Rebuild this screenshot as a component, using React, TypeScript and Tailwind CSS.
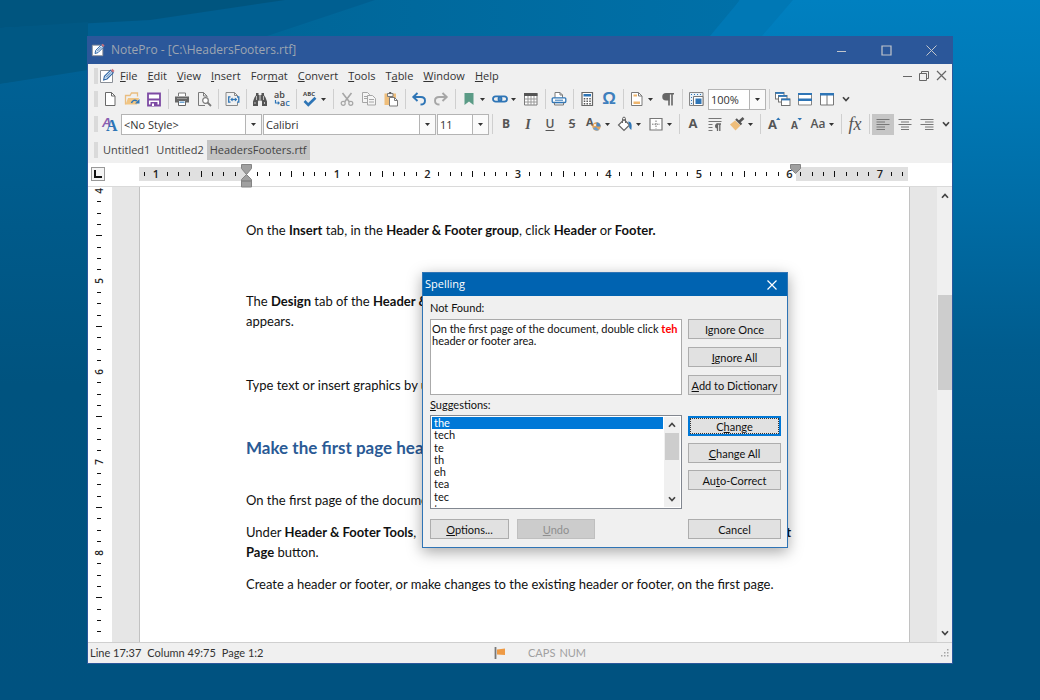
import React, { type ReactNode } from "react";

const blue = "#2e75b6";
const dark = "#555555";
const mid = "#7a7a7a";
const pale = "#a6a6a6";

function Glyph({ children, size = 16 }: { children: ReactNode; size?: number }) {
  return (
    <svg width={size} height={size} viewBox="0 0 16 16" fill="none" aria-hidden="true" className="shrink-0 overflow-visible">
      {children}
    </svg>
  );
}

function Caret() {
  return (
    <svg width="5" height="3" viewBox="0 0 5 3" aria-hidden="true" className="shrink-0">
      <path d="M0 0h5L2.5 3z" fill="#333" />
    </svg>
  );
}

function Chevron({ up = false }: { up?: boolean }) {
  return (
    <svg width="8" height="6" viewBox="0 0 8 6" fill="none" aria-hidden="true">
      <path d={up ? "M1 4.8L4 1.5l3 3.3" : "M1 1.2l3 3.3 3-3.3"} stroke="#444" strokeWidth="1.7" />
    </svg>
  );
}

function Grip() {
  return <span className="mr-px h-4 w-1 shrink-0 bg-[#dadada]" />;
}

function Divider() {
  return (
    <span className="flex w-1.5 shrink-0 justify-center">
      <span className="h-5 w-px bg-[#cfcfcf]" />
    </span>
  );
}

function Tool({
  label,
  children,
  menu = false,
  active = false,
}: {
  label: string;
  children: ReactNode;
  menu?: boolean;
  active?: boolean;
}) {
  return (
    <button
      type="button"
      aria-label={label}
      aria-pressed={active || undefined}
      className={
        active
          ? "flex h-[21px] shrink-0 items-center bg-[#c6c6c6] text-[#555]"
          : "flex h-[21px] shrink-0 items-center text-[#555] hover:bg-[#dedede]"
      }
    >
      <span className="flex w-[22px] items-center justify-center">{children}</span>
      {menu && (
        <span className="flex w-[9px] justify-start">
          <Caret />
        </span>
      )}
    </button>
  );
}

function Combo({ label, value, width }: { label: string; value: string; width: string }) {
  return (
    <label className={`relative flex h-[21px] shrink-0 border border-[#b4b4b4] bg-white ${width}`}>
      <span className="sr-only">{label}</span>
      <select className="w-full appearance-none bg-transparent pl-0.5 text-[11px] leading-[19px] text-[#333] outline-none">
        <option>{value}</option>
      </select>
      <span className="pointer-events-none absolute inset-y-0 right-0 flex w-4 items-center justify-center border-l border-[#b4b4b4] bg-[#fafafa]">
        <Caret />
      </span>
    </label>
  );
}

function PencilPage({ size = 16 }: { size?: number }) {
  return (
    <Glyph size={size}>
      <path d="M1.5 2.5h12v12h-12z" fill="#fff" stroke="#8a8f96" />
      <path d="M4.6 12l.8-3.6L11.6 2.2l2.6 2.6L8 11z" fill="#dcebf7" stroke="#2b64a5" strokeWidth="1.1" />
      <path d="M7 9.4l5-5" stroke="#2b64a5" strokeWidth=".9" />
      <path d="M11.8 2.4l1.6-1.6 2.1 2.1-1.6 1.6z" fill="#c9707c" />
    </Glyph>
  );
}

function NewIcon() {
  return (
    <Glyph>
      <path d="M3.5 1.5h6L13 5v9.5H3.5z" fill="#fff" stroke="#696969" />
      <path d="M9.5 1.5V5H13" stroke="#696969" />
    </Glyph>
  );
}
function OpenIcon() {
  return (
    <Glyph>
      <path d="M1.5 13.5v-9H6L7.5 2h6v3.5" stroke="#e9bd80" strokeWidth="1.3" />
      <path d="M1.5 13.5L4 7h11l-2 6.5z" fill="#f1c583" />
      <path d="M7.5 12c.8-2.8 3.5-3.5 5.5-2" stroke={blue} strokeWidth="1.5" />
      <path d="M15.5 8v4.5H11z" fill={blue} />
    </Glyph>
  );
}
function SaveIcon() {
  return (
    <Glyph>
      <path d="M2 2.5h12v12H2z" fill="#fff" stroke="#7d4aa3" strokeWidth="1.8" />
      <path d="M2 7.5h12v2H2z" fill="#7d4aa3" />
      <path d="M4.5 11h7v4h-7z" fill="#7d4aa3" />
      <path d="M6 12.5h2V15H6z" fill="#fff" />
    </Glyph>
  );
}
function PrintIcon() {
  return (
    <Glyph>
      <path d="M4.5 5V2h7v3" fill="#fff" stroke={mid} />
      <path d="M1 5.5h14v6H1z" fill="#666" />
      <path d="M3 7.5h10" stroke="#999" />
      <path d="M4.5 9.5h7v5h-7z" fill="#fff" stroke="#666" />
      <path d="M5.5 10.5h5V12h-5z" fill="#6fa5d3" />
    </Glyph>
  );
}
function PreviewIcon() {
  return (
    <Glyph>
      <path d="M9 14.5H2.5v-13h5L11 5v1" stroke={mid} />
      <path d="M7.5 1.5V5H11" stroke={mid} />
      <circle cx="9.5" cy="9.5" r="2.8" fill="#fff" stroke={mid} strokeWidth="1.2" />
      <path d="M11.5 11.5L15 15" stroke={mid} strokeWidth="1.8" />
    </Glyph>
  );
}
function FitIcon() {
  return (
    <Glyph>
      <path d="M4 1.5h6.500l3 3v2M13.500 11.500v3h-11.500v-13h3" stroke="#8a8a8a" />
      <path d="M10.500 1.500v3h3" stroke="#8a8a8a" />
      <path d="M6.500 5.800H4.700v5.400h1.800M13 5.800h1.800v5.400H13" stroke={blue} strokeWidth="1.3" />
      <path d="M7 8.5h5.5" stroke={blue} strokeWidth="1.3" />
      <path d="M8.600 6.500v4l-2.400-2zM10.900 6.500v4l2.400-2z" fill={blue} />
    </Glyph>
  );
}
function FindIcon() {
  return (
    <Glyph>
      <path
        d="M4 2h2.500v2h3V2H12v2.200l1.500 2.300 1.500 4V15h-5v-4.500l-.5-1h-3l-.5 1V15H1v-4.500l1.500-4L4 4.200z"
        fill={dark}
      />
      <path d="M7.5 4v5M8.500 4v5" stroke="#aaa" strokeWidth=".8" />
      <path d="M3 11v2M12.500 11v2M4.500 5v4M11.500 5v4" stroke="#c9c9c9" strokeWidth=".9" />
    </Glyph>
  );
}
function ReplaceIcon() {
  return (
    <Glyph>
      <text x="0" y="7" fontSize="9" fontFamily="Open Sans, sans-serif" fill="#444" fontWeight="600">ab</text>
      <text x="6" y="15" fontSize="9" fontFamily="Open Sans, sans-serif" fill="#444" fontWeight="600">
        a<tspan fill={blue}>c</tspan>
      </text>
      <path d="M1.5 9v3h3" stroke={blue} strokeWidth="1.2" />
      <path d="M3.8 10L6 12l-2.200 2z" fill={blue} />
    </Glyph>
  );
}
function SpellIcon() {
  return (
    <Glyph>
      <text x="1" y="5" fontSize="6" fontFamily="Open Sans, sans-serif" fontWeight="700" fill="#444">ABC</text>
      <path d="M2.5 10l3.800 3.800 7.200-7" stroke={blue} strokeWidth="2.6" />
    </Glyph>
  );
}
function CutIcon() {
  return (
    <Glyph>
      <path d="M3.5 2l6.800 8.800M12.500 2l-6.800 8.800" stroke={pale} strokeWidth="1.6" />
      <circle cx="4.2" cy="12.3" r="2" stroke={pale} strokeWidth="1.2" />
      <circle cx="11.8" cy="12.3" r="2" stroke={pale} strokeWidth="1.2" />
    </Glyph>
  );
}
function CopyIcon() {
  return (
    <Glyph>
      <path d="M1.5 1.5h5l2 2v8h-7z" fill="#f5f5f5" stroke={pale} />
      <path d="M3 5.5h3M3 7.5h3" stroke={pale} />
      <path d="M6.5 4.5h5l3 3V14h-8z" fill="#f5f5f5" stroke={pale} />
      <path d="M8 8.5h5M8 11h5" stroke={pale} />
    </Glyph>
  );
}
function PasteIcon() {
  return (
    <Glyph>
      <path d="M1.5 2.5H13V14H1.500z" fill="#efbe7b" />
      <path d="M4.5 2.5H10v3H4.500z" fill="#f4f4f4" stroke={mid} />
      <path d="M6.2 1h2v1.500h-2z" fill={dark} />
      <path d="M6.5 6.5h5l3 3V15h-8z" fill="#fff" stroke={mid} />
      <path d="M11.5 6.500v3h3" stroke={mid} />
    </Glyph>
  );
}
function TurnIcon({ color, flip = false }: { color: string; flip?: boolean }) {
  return (
    <Glyph>
      <g transform={flip ? "matrix(-1 0 0 1 16 0)" : undefined}>
        <path d="M2.5 6h7.300c2.600 0 4.200 1.500 4.200 3.700 0 2.300-1.800 3.800-4.500 3.800" stroke={color} strokeWidth="1.9" />
        <path d="M6.5 2L2.300 6l4.200 4" stroke={color} strokeWidth="1.9" />
      </g>
    </Glyph>
  );
}
function BookmarkIcon() {
  return (
    <Glyph>
      <path d="M3.5 2h9v12L8 10.500 3.500 14z" fill="#5b9b86" />
    </Glyph>
  );
}
function LinkIcon() {
  return (
    <Glyph>
      <rect x="1" y="5.3" width="8.5" height="5.4" rx="2.7" stroke={blue} strokeWidth="1.8" />
      <rect x="6.5" y="5.3" width="8.5" height="5.4" rx="2.7" stroke={blue} strokeWidth="1.8" />
      <path d="M6 8h4" stroke={blue} strokeWidth="1.3" />
    </Glyph>
  );
}
function TableIcon() {
  return (
    <Glyph>
      <path d="M1.5 2.5H14V14H1.500z" fill="#fff" stroke={mid} />
      <path d="M1 2h13.500v3H1z" fill={dark} />
      <path d="M2 8h12M2 11h12M5 5v9M8 5v9M11 5v9" stroke="#999" />
    </Glyph>
  );
}
function QuickPrintIcon() {
  return (
    <Glyph>
      <path d="M4 7V1.500h5L11.500 4v3" fill="#fff" stroke={mid} />
      <path d="M9 1.500V4h2.500" stroke={mid} />
      <rect x="1.2" y="6.8" width="13.6" height="4.7" rx="1" fill="#fff" stroke={blue} strokeWidth="1.3" />
      <path d="M4 9.200h8" stroke={blue} />
      <path d="M3.500 11.500V14h9v-2.500" stroke={mid} />
    </Glyph>
  );
}
function CalcIcon() {
  return (
    <Glyph>
      <path d="M3 1.500h10.500v13H3z" fill="#fff" stroke="#666" strokeWidth="1.2" />
      <path d="M4.500 3H12v2.500H4.500z" fill={blue} />
      <path d="M5.500 7v6.500M8.200 7v6.500M11 7v6.500" stroke={dark} strokeWidth="1.5" strokeDasharray="1.5 1" />
    </Glyph>
  );
}
function DocIcon() {
  return (
    <Glyph>
      <path d="M2.500 1.500h7L13 5v9.500H2.500z" fill="#fff" stroke={mid} />
      <path d="M9.500 1.500V5H13" stroke={mid} />
      <path d="M4.500 3.500H8v2H4.500zM4.500 10.500H11V13H4.500z" fill="#efb56c" />
    </Glyph>
  );
}
function PilcrowIcon() {
  return (
    <Glyph>
      <path d="M14 2.800H6.500M9 2.800v11.700M12 2.800v11.700" stroke="#666" strokeWidth="1.6" />
      <path d="M6 2h3.500v7.500H6A3.700 3.700 0 016 2z" fill="#666" />
    </Glyph>
  );
}
function RulersIcon() {
  return (
    <Glyph>
      <path d="M1.500 1.500H15v13H1.500z" fill="#e9f1f8" stroke="#858585" />
      <path d="M5.500 5.500H15v9H5.500z" fill="#fff" stroke="#777" />
      <path d="M7.500 7.500h6v5.500h-6z" fill={blue} />
      <path d="M3 3.500h11" stroke={blue} strokeDasharray="1 2" />
      <path d="M3.500 6v8" stroke={blue} strokeDasharray="1 2" />
    </Glyph>
  );
}
function CascadeIcon() {
  return (
    <Glyph>
      {[
        [0.5, 1.5],
        [3.5, 4.5],
        [6.5, 8],
      ].map(([x, y]) => (
        <g key={x}>
          <rect x={x} y={y} width="8.5" height="6.5" fill="#fff" stroke="#737373" />
          <path d={`M${x} ${y + 0.5}h8.5`} stroke={blue} strokeWidth="1.8" />
        </g>
      ))}
    </Glyph>
  );
}
function StackIcon() {
  return (
    <Glyph>
      <path d="M1.500 2.500h13V14h-13z" fill="#fff" stroke="#858585" />
      <path d="M1 2h14v2H1zM1 7.500h14V10H1z" fill={blue} />
    </Glyph>
  );
}
function SideIcon() {
  return (
    <Glyph>
      <path d="M1.500 2.500h13V14h-13zM8 4v10" fill="#fff" stroke="#777" />
      <path d="M1 2h14v2.500H1z" fill={blue} />
    </Glyph>
  );
}
function StylesIcon() {
  return (
    <Glyph>
      <text x="0" y="11" fontSize="13" fontWeight="700" fontStyle="italic" fontFamily="Liberation Sans, sans-serif" fill="#8b5fb0">A</text>
      <text x="4" y="15" fontSize="16" fontWeight="700" fontFamily="Liberation Serif, serif" fill={blue}>A</text>
    </Glyph>
  );
}
function FontColorIcon() {
  return (
    <Glyph>
      <text x="0" y="9.5" fontSize="11" fontWeight="700" fontFamily="Open Sans, sans-serif" fill={dark}>A</text>
      <circle cx="10.5" cy="10.5" r="4.2" fill="#e7a55b" />
      <path d="M10.500 6.300a4.200 4.200 0 014.200 4.200h-4.200z" fill="#4a86c0" />
      <path d="M7 12a4.200 4.200 0 006 2l-3-3z" fill="#6c9fce" />
      <circle cx="9" cy="9" r="1" fill="#fff" />
    </Glyph>
  );
}
function BucketIcon() {
  return (
    <Glyph>
      <path d="M7 3.500L12.500 9 7 14.500 1.500 9z" fill="#fff" stroke="#666" strokeWidth="1.2" />
      <path d="M5.500 7V2.500c0-1.800 3-1.800 3 0V7" stroke="#666" />
      <path d="M11 5.500c3.500 0 4.300 3 3.300 8.500-2-1.500-2.800-3-1.800-5z" fill={blue} />
    </Glyph>
  );
}
function BorderIcon() {
  return (
    <Glyph>
      <path d="M2 2.500h12V14H2z" fill="#fff" stroke="#777" strokeWidth="1.2" />
      <path d="M8 4.500v8M4 8.200h8" stroke="#777" strokeDasharray="1.5 1" />
    </Glyph>
  );
}
function ParagraphIcon() {
  return (
    <Glyph>
      <path d="M1.500 2.500h13M1.500 5.500h13M1.500 8.500h4M1.500 11.500h4M1.500 14.500h4" stroke="#777" />
      <path d="M14 8H9.500M10.500 7.500V15M12.800 7.500V15" stroke="#666" strokeWidth="1.3" />
      <path d="M10.500 7.500a2.500 2.500 0 000 5z" fill="#666" />
    </Glyph>
  );
}
function BrushIcon() {
  return (
    <Glyph>
      <path d="M1 8.500l5-4 5.500 5-5 5z" fill="#efbe7b" />
      <path d="M7 3l5.500 5.500" stroke={dark} strokeWidth="2.2" />
      <path d="M10 6l4.500-4" stroke={dark} strokeWidth="2.6" />
    </Glyph>
  );
}
function SizeIcon({ grow = false }: { grow?: boolean }) {
  return (
    <Glyph>
      <text x={grow ? 2 : 3} y="13" fontSize={grow ? 13 : 10} fontWeight="700" fontFamily="Open Sans, sans-serif" fill={dark}>A</text>
      <path d={grow ? "M10 4h4.500l-2.200-2.500z" : "M9.500 2H14l-2.200 2.500z"} fill={blue} />
    </Glyph>
  );
}
function AlignIcon({ start, end }: { start: number; end: number }) {
  return (
    <Glyph>
      <path d="M1.500 3.500h13M1.500 8.500h13" stroke="#777" />
      <path d={`M${start} 6H${end}M${start} 11H${end}M${start} 13.500H${end}`} stroke="#777" />
    </Glyph>
  );
}

const menus: [string, string, string][] = [
  ["", "F", "ile"],
  ["", "E", "dit"],
  ["", "V", "iew"],
  ["", "I", "nsert"],
  ["For", "m", "at"],
  ["", "C", "onvert"],
  ["", "T", "ools"],
  ["T", "a", "ble"],
  ["", "W", "indow"],
  ["", "H", "elp"],
];

function Mnemonic({ parts }: { parts: [string, string, string] }) {
  return (
    <span>
      {parts[0]}
      <span className="underline underline-offset-1">{parts[1]}</span>
      {parts[2]}
    </span>
  );
}

function TitleBar() {
  return (
    <header className="flex h-7 items-center gap-1 bg-[#2b579a] pl-[3px] text-[#c2c6cc]">
      <PencilPage size={14} />
      <h1 className="ml-0.5 flex-1 text-[12px] text-[#9da5b1]">NotePro - [C:\HeadersFooters.rtf]</h1>
      <button type="button" aria-label="Minimize" className="flex h-7 w-[41px] items-center justify-center">
        <svg width="11" height="11" viewBox="0 0 11 11" stroke="currentColor"><path d="M1 6.500h9" /></svg>
      </button>
      <button type="button" aria-label="Maximize" className="flex h-7 w-[41px] items-center justify-center">
        <svg width="11" height="11" viewBox="0 0 11 11" fill="none" stroke="currentColor"><path d="M1 1h9v9H1z" strokeWidth="1.2" /></svg>
      </button>
      <button type="button" aria-label="Close" className="flex h-7 w-[41px] items-center justify-center">
        <svg width="11" height="11" viewBox="0 0 11 11" stroke="currentColor"><path d="M.5.500l10 10M10.500.500l-10 10" /></svg>
      </button>
    </header>
  );
}

function MenuBar() {
  return (
    <div className="flex h-[23px] items-center pl-1.5">
      <Grip />
      <PencilPage />
      <nav className="flex flex-1 text-[11px] text-[#333]">
        {menus.map((m) => (
          <button key={m.join("")} type="button" className="px-[5px] leading-5 hover:bg-[#dedede]">
            <Mnemonic parts={m} />
          </button>
        ))}
      </nav>
      <div className="flex items-center gap-1.5 pr-[5px] text-[#666]">
        <button type="button" aria-label="Minimize document">
          <svg width="11" height="11" viewBox="0 0 11 11" stroke="currentColor"><path d="M1 6.500h9" /></svg>
        </button>
        <button type="button" aria-label="Restore document">
          <svg width="11" height="11" viewBox="0 0 11 11" fill="none" stroke="currentColor"><path d="M.5 3.500h7v7h-7zM2.500 3.500v-2h7v7h-2" /></svg>
        </button>
        <button type="button" aria-label="Close document">
          <svg width="11" height="11" viewBox="0 0 11 11" stroke="currentColor"><path d="M1 1l9 9M10 1l-9 9" strokeWidth="1.2" /></svg>
        </button>
      </div>
    </div>
  );
}

function StandardBar() {
  return (
    <div role="toolbar" aria-label="Standard" className="flex h-6 items-center overflow-hidden pl-1.5">
      <Grip />
      <Tool label="New"><NewIcon /></Tool>
      <Tool label="Open"><OpenIcon /></Tool>
      <Tool label="Save"><SaveIcon /></Tool>
      <Divider />
      <Tool label="Print"><PrintIcon /></Tool>
      <Tool label="Print preview"><PreviewIcon /></Tool>
      <Divider />
      <Tool label="Page width"><FitIcon /></Tool>
      <Divider />
      <Tool label="Find"><FindIcon /></Tool>
      <Tool label="Replace"><ReplaceIcon /></Tool>
      <Divider />
      <Tool label="Spelling" menu><SpellIcon /></Tool>
      <Divider />
      <Tool label="Cut"><CutIcon /></Tool>
      <Tool label="Copy"><CopyIcon /></Tool>
      <Tool label="Paste"><PasteIcon /></Tool>
      <Divider />
      <Tool label="Undo"><TurnIcon color={blue} /></Tool>
      <Tool label="Redo"><TurnIcon color={pale} flip /></Tool>
      <Divider />
      <Tool label="Bookmark" menu><BookmarkIcon /></Tool>
      <Tool label="Link" menu><LinkIcon /></Tool>
      <Tool label="Insert table"><TableIcon /></Tool>
      <Divider />
      <Tool label="Quick print"><QuickPrintIcon /></Tool>
      <Divider />
      <Tool label="Calculator"><CalcIcon /></Tool>
      <Tool label="Symbol">
        <span className="font-['Liberation_Sans',sans-serif] text-[17px] leading-4 font-bold text-[#3f7fbd]">Ω</span>
      </Tool>
      <Divider />
      <Tool label="Header and footer" menu><DocIcon /></Tool>
      <Tool label="Show marks"><PilcrowIcon /></Tool>
      <Divider />
      <Tool label="Rulers"><RulersIcon /></Tool>
      <Combo label="Zoom" value="100%" width="w-[58px] ml-px" />
      <Divider />
      <Tool label="Cascade"><CascadeIcon /></Tool>
      <Tool label="Tile horizontally"><StackIcon /></Tool>
      <Tool label="Tile vertically"><SideIcon /></Tool>
      <button type="button" aria-label="More standard tools" className="ml-1 shrink-0"><Chevron /></button>
    </div>
  );
}

function FormatBar() {
  return (
    <div role="toolbar" aria-label="Formatting" className="flex h-[26px] items-center overflow-hidden pl-1.5">
      <Grip />
      <Tool label="Styles"><StylesIcon /></Tool>
      <div className="flex gap-px">
        <Combo label="Style" value="<No Style>" width="w-[141px]" />
        <Combo label="Font" value="Calibri" width="w-[173px]" />
        <Combo label="Font size" value="11" width="w-[52px]" />
      </div>
      <Divider />
      <Tool label="Bold"><span className="text-[12px] font-bold">B</span></Tool>
      <Tool label="Italic"><span className="font-['Liberation_Serif',serif] text-[14px] font-bold italic">I</span></Tool>
      <Tool label="Underline"><span className="text-[12px] font-semibold underline underline-offset-2">U</span></Tool>
      <Tool label="Strikethrough"><span className="text-[12px] font-semibold line-through">S</span></Tool>
      <Tool label="Font color" menu><FontColorIcon /></Tool>
      <Tool label="Fill" menu><BucketIcon /></Tool>
      <Tool label="Borders" menu><BorderIcon /></Tool>
      <Divider />
      <Tool label="Font"><span className="text-[13px] font-bold">A</span></Tool>
      <Tool label="Paragraph"><ParagraphIcon /></Tool>
      <Tool label="Format painter" menu><BrushIcon /></Tool>
      <Divider />
      <Tool label="Grow font"><SizeIcon grow /></Tool>
      <Tool label="Shrink font"><SizeIcon /></Tool>
      <Tool label="Change case" menu><span className="text-[12px] font-semibold">Aa</span></Tool>
      <Divider />
      <Tool label="Formula">
        <span className="font-['Liberation_Serif',serif] text-[18px] leading-5 italic">fx</span>
      </Tool>
      <Divider />
      <Tool label="Align left" active><AlignIcon start={1.5} end={10} /></Tool>
      <Tool label="Align center"><AlignIcon start={4} end={12} /></Tool>
      <Tool label="Align right"><AlignIcon start={6} end={14.5} /></Tool>
      <button type="button" aria-label="More formatting tools" className="ml-1 shrink-0"><Chevron /></button>
    </div>
  );
}

function FileTabs() {
  return (
    <div className="flex h-[26px] items-center pl-1.5 text-[11px] text-[#444]">
      <Grip />
      <div role="tablist" className="ml-px flex">
        <button type="button" role="tab" aria-selected="false" className="px-[3px] leading-5">Untitled1</button>
        <button type="button" role="tab" aria-selected="false" className="px-[3px] leading-5">Untitled2</button>
        <button type="button" role="tab" aria-selected="true" className="bg-[#c4c4c4] px-[3px] leading-5">HeadersFooters.rtf</button>
      </div>
    </div>
  );
}

function HorizontalRuler() {
  return (
    <div className="flex h-6 items-start border-b border-[#dadada] bg-white pt-1 pl-[3px]">
      <span className="flex h-3.5 w-3.5 items-center justify-center border border-[#999] bg-[#f4f4f4]">
        <svg width="8" height="8" viewBox="0 0 8 8" fill="none"><path d="M1 0v7h7" stroke="#111" strokeWidth="2" /></svg>
      </span>
      <div className="relative mr-11 ml-[34px] flex h-3.5 flex-1 bg-linear-to-r from-[#e0e0e0] from-14% to-white to-14%">
        <span className="absolute inset-y-0 right-0 w-[112px] bg-[#e0e0e0]" />
        <div className="relative flex flex-1">
          {Array.from({ length: 68 }, (_, i) => {
            const k = i - 9;
            return (
              <span key={i} className="flex w-0 flex-1 items-center justify-center text-[11px] leading-[14px] font-semibold text-[#222]">
                {k === 0 ? null : k % 8 === 0 ? (
                  Math.abs(k / 8)
                ) : Math.abs(k % 8) === 4 ? (
                  <span className="h-1.5 w-px bg-[#111]" />
                ) : (
                  <span className="h-1 w-px bg-[#111]" />
                )}
              </span>
            );
          })}
        </div>
        <svg width="11" height="24" viewBox="0 0 11 24" className="absolute -top-[3px] left-[102px]" aria-hidden="true">
          <path d="M.5.500h10v4l-5 6-5-6zM5.500 10.500l5 5V17H.5v-1.500zM.5 17h10v6H.5z" fill="#a0a0a0" stroke="#848484" />
        </svg>
        <svg width="11" height="11" viewBox="0 0 11 11" className="absolute -top-[3px] right-[107px]" aria-hidden="true">
          <path d="M.5.500h10v4l-5 5-5-5z" fill="#a0a0a0" stroke="#848484" />
        </svg>
      </div>
    </div>
  );
}

function VerticalRuler() {
  return (
    <div className="w-6 shrink-0 overflow-hidden bg-white">
      <div className="-mt-0.5 flex h-[464px] w-[22px] flex-col">
        {Array.from({ length: 41 }, (_, i) => (
          <span key={i} className="flex h-0 flex-1 items-center justify-center text-[10px] leading-none font-semibold text-[#222]">
            {i % 8 === 0 && i < 40 ? (
              <span className="-rotate-90">{4 + i / 8}</span>
            ) : i % 8 === 4 ? (
              <span className="h-px w-1.5 bg-[#111]" />
            ) : (
              <span className="h-px w-1 bg-[#111]" />
            )}
          </span>
        ))}
      </div>
    </div>
  );
}

function DocumentPage() {
  return (
    <article className="min-w-0 flex-1 border-x border-[#c2c2c2] bg-white pt-[33px] pr-[118px] pl-[106px] font-['Lato','Open_Sans',sans-serif] text-[13px] leading-5 whitespace-nowrap text-[#111]">
      <p>
        On the <b>Insert</b> tab, in the <b>Header &amp; Footer group</b>, click <b>Header</b> or <b>Footer.</b>
      </p>
      <p className="mt-[51px]">
        The <b>Design</b> tab of the <b>Header &amp; Footer</b>
        <br />
        appears.
      </p>
      <p className="mt-11">Type text or insert graphics by using</p>
      <h2 className="mt-[41px] text-[17px] leading-6 font-bold text-[#2a5a95]">Make the first page header</h2>
      <p className="mt-[30px]">On the first page of the document,</p>
      <p className="mt-3 flex justify-between">
        <span>
          Under <b>Header &amp; Footer Tools</b>,
        </span>
        <b>First</b>
      </p>
      <p>
        <b>Page</b> button.
      </p>
      <p className="mt-3">Create a header or footer, or make changes to the existing header or footer, on the first page.</p>
    </article>
  );
}

function DialogButton({
  parts,
  look = "normal",
}: {
  parts: [string, string, string];
  look?: "normal" | "focused" | "disabled";
}) {
  const looks = {
    normal: "border border-[#adadad] bg-[#e1e1e1] text-[#111]",
    focused: "border-2 border-[#0078d7] bg-[#e1e1e1] text-[#111] outline outline-1 -outline-offset-3 outline-dotted outline-[#333]",
    disabled: "border border-[#bfbfbf] bg-[#cccccc] text-[#8f8f8f]",
  };
  return (
    <button
      type="button"
      disabled={look === "disabled"}
      className={`flex h-5 w-full items-center justify-center leading-none ${looks[look]}`}
    >
      <Mnemonic parts={parts} />
    </button>
  );
}

function SpellingDialog() {
  return (
    <section
      role="dialog"
      aria-label="Spelling"
      className="absolute top-[236px] left-[334px] w-[366px] border border-[#2f74b5] bg-[#f0f0f0] font-['Lato','Open_Sans',sans-serif] text-[11px] text-[#111] shadow-[0_4px_14px_rgba(0,0,0,0.35)]"
    >
      <header className="flex h-[23px] items-center justify-between bg-[#0063b1] pr-2.5 pl-0.5 text-white">
        <h2 className="font-['Open_Sans',sans-serif] text-[11px]">Spelling</h2>
        <button type="button" aria-label="Close spelling">
          <svg width="10" height="10" viewBox="0 0 10 10" stroke="#fff" strokeWidth="1.2"><path d="M.5.500l9 9M9.500.500l-9 9" /></svg>
        </button>
      </header>
      <div className="flex justify-between pt-1 pr-1.5 pb-2 pl-[7px]">
        <div className="flex w-[252px] flex-col">
          <p className="leading-4">Not Found:</p>
          <div className="mt-[3px] h-[76px] border border-[#aaa] bg-white px-px pt-[3px] leading-3">
            On the first page of the document, double click <b className="text-[#f00]">teh</b>
            <br />
            header or footer area.
          </div>
          <p id="suggestions" className="mt-0.5 leading-4">
            <span className="underline">S</span>uggestions:
          </p>
          <div className="mt-0.5 flex h-[94px] border border-[#828790] bg-white p-px">
            <div className="flex-1 overflow-hidden">
              <ul role="listbox" aria-labelledby="suggestions" className="flex h-[86px] flex-col leading-3">
                {["the", "tech", "te", "th", "eh", "tea", "tec"].map((w, i) => (
                  <li
                    key={w}
                    role="option"
                    aria-selected={i === 0}
                    className={i === 0 ? "h-0 flex-1 bg-[#0078d7] pl-0.5 text-white" : "h-0 flex-1 pl-0.5"}
                  >
                    {w}
                  </li>
                ))}
              </ul>
              <div className="pl-0.5 leading-3">t</div>
            </div>
            <div className="ml-px flex w-4 flex-col items-center bg-[#f0f0f0]">
              <button type="button" aria-label="Scroll suggestions up" className="flex h-4 items-center"><Chevron up /></button>
              <span className="h-[27px] w-3.5 bg-[#cdcdcd]" />
              <span className="flex-1" />
              <button type="button" aria-label="Scroll suggestions down" className="flex h-4 items-center"><Chevron /></button>
            </div>
          </div>
          <div className="mt-2.5 flex gap-2">
            <div className="w-[79px]"><DialogButton parts={["", "O", "ptions..."]} /></div>
            <div className="w-[78px]"><DialogButton parts={["", "U", "ndo"]} look="disabled" /></div>
          </div>
        </div>
        <div className="flex w-[93px] flex-col gap-2 pt-[19px]">
          <DialogButton parts={["I", "g", "nore Once"]} />
          <DialogButton parts={["", "I", "gnore All"]} />
          <DialogButton parts={["", "A", "dd to Dictionary"]} />
          <div className="mt-[13px] flex flex-col gap-[7px]">
            <DialogButton parts={["C", "h", "ange"]} look="focused" />
            <DialogButton parts={["", "C", "hange All"]} />
            <DialogButton parts={["Au", "t", "o-Correct"]} />
          </div>
          <div className="mt-auto"><DialogButton parts={["Cancel", "", ""]} /></div>
        </div>
      </div>
    </section>
  );
}

function StatusBar() {
  return (
    <footer className="flex h-[21px] shrink-0 items-center border-t border-[#cfcfcf] bg-[#f0f0f0] px-0.5 font-['Lato','Open_Sans',sans-serif] text-[11px] text-[#333]">
      <div className="flex w-[404px] gap-1.5">
        <span>Line 17:37</span>
        <span>Column 49:75</span>
        <span>Page 1:2</span>
      </div>
      <svg width="14" height="14" viewBox="0 0 14 14" aria-hidden="true">
        <path d="M3 3.500l8-1V9L3 8.500z" fill="#ee9a45" />
        <path d="M1.500 1v12" stroke="#777" strokeWidth="1.8" />
      </svg>
      <div className="ml-5 flex flex-1 gap-1 text-[#a0a0a0]">
        <span>CAPS</span>
        <span>NUM</span>
      </div>
      <svg width="10" height="10" viewBox="0 0 10 10" aria-hidden="true" fill="#a5a5a5">
        <path d="M7 1h1.500v1.500H7zM7 4h1.500v1.500H7zM7 7h1.500v1.500H7zM4 4h1.500v1.500H4zM4 7h1.500v1.500H4zM1 7h1.500v1.500H1z" />
      </svg>
    </footer>
  );
}

function Backdrop() {
  return (
    <svg className="absolute inset-0 h-full w-full" viewBox="0 0 1040 700" preserveAspectRatio="none" aria-hidden="true">
      <defs>
        <linearGradient id="base" x1="0" y1="0" x2="0" y2="1">
          <stop offset="0" stopColor="#0080c0" />
          <stop offset="0.1" stopColor="#007bb9" />
          <stop offset="0.3" stopColor="#006ca5" />
          <stop offset="0.5" stopColor="#005c8e" />
          <stop offset="0.75" stopColor="#005280" />
          <stop offset="1" stopColor="#005280" />
        </linearGradient>
        <linearGradient id="left" x1="0" y1="0" x2="1" y2="0">
          <stop offset="0" stopColor="#00608f" />
          <stop offset="1" stopColor="#0070a8" />
        </linearGradient>
        <linearGradient id="low" x1="0" y1="0" x2="0" y2="1">
          <stop offset="0" stopColor="#006195" />
          <stop offset="0.5" stopColor="#00537f" />
          <stop offset="1" stopColor="#005280" />
        </linearGradient>
      </defs>
      <path d="M0 0h1040v700H0z" fill="url(#base)" />
      <path d="M0 0h740L600 200 0 300z" fill="url(#left)" />
      <path d="M740 0h53L690 120h-50z" fill="#0078b5" />
      <path d="M0 0h375L255 40 88 60 0 84z" fill="#005f91" />
      <path d="M0 0h285L150 20 0 28z" fill="#00557f" />
      <path d="M0 28l88-6v50L0 84z" fill="#005884" />
      <path d="M0 84l88-14v630H0z" fill="url(#low)" />
    </svg>
  );
}

export default function App() {
  return (
    <main className="relative flex h-screen flex-col overflow-hidden bg-[#005b8c] px-[87px] py-9 font-['Open_Sans',sans-serif]">
      <Backdrop />
      <div className="relative flex min-h-0 flex-1 flex-col border-x border-b border-[#2b579a] bg-[#f0f0f0]">
        <TitleBar />
        <MenuBar />
        <StandardBar />
        <FormatBar />
        <FileTabs />
        <HorizontalRuler />
        <div className="flex min-h-0 flex-1 overflow-hidden bg-[#e6e6e6]">
          <VerticalRuler />
          <div className="flex min-w-0 flex-1 px-[27px]">
            <DocumentPage />
          </div>
          <div className="flex w-[15px] flex-col items-center bg-[#f0f0f0]">
            <button type="button" aria-label="Scroll up" className="flex h-[18px] items-center"><Chevron up /></button>
            <span className="h-[90px]" />
            <span className="h-[95px] w-3.5 bg-[#cdcdcd]" />
            <span className="flex-1" />
            <button type="button" aria-label="Scroll down" className="flex h-[18px] items-center"><Chevron /></button>
          </div>
        </div>
        <StatusBar />
        <SpellingDialog />
      </div>
    </main>
  );
}
